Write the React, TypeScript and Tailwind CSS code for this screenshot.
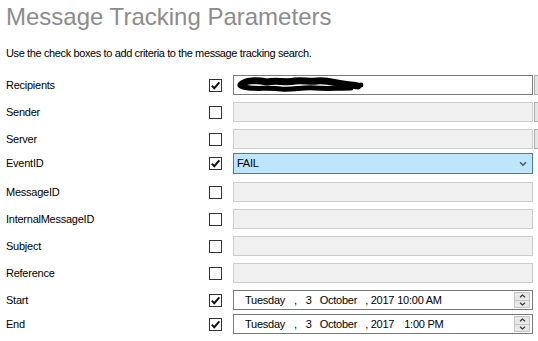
import React from 'react';

type Row = {
  label: string;
  checked: boolean;
  kind: 'text' | 'disabled' | 'combo' | 'date';
  gap: string;
  extra?: boolean;
  value?: string;
  time?: string;
};

const rows: Row[] = [
  { label: 'Recipients', checked: true, kind: 'text', gap: 'mt-0', extra: true },
  { label: 'Sender', checked: false, kind: 'disabled', gap: 'mt-[7px]', extra: true },
  { label: 'Server', checked: false, kind: 'disabled', gap: 'mt-[7px]', extra: true },
  { label: 'EventID', checked: true, kind: 'combo', gap: 'mt-[4px]', value: 'FAIL' },
  { label: 'MessageID', checked: false, kind: 'disabled', gap: 'mt-[8px]' },
  { label: 'InternalMessageID', checked: false, kind: 'disabled', gap: 'mt-[7px]' },
  { label: 'Subject', checked: false, kind: 'disabled', gap: 'mt-[7px]' },
  { label: 'Reference', checked: false, kind: 'disabled', gap: 'mt-[7px]' },
  { label: 'Start', checked: true, kind: 'date', gap: 'mt-[7px]', time: '10:00 AM' },
  { label: 'End', checked: true, kind: 'date', gap: 'mt-[4px]', time: '1:00 PM' },
];

function CheckBox({ checked }: { checked: boolean }) {
  return (
    <div className="w-[13px] h-[13px] border border-[#333333] bg-white flex items-center justify-center shrink-0">
      {checked && (
        <svg width="11" height="11" viewBox="0 0 11 11">
          <path d="M1.8 5.6 L4.3 8.2 L9.3 2.4" fill="none" stroke="#111" strokeWidth="2" />
        </svg>
      )}
    </div>
  );
}

// redacted recipient address
function Scribble() {
  return (
    <svg width="130" height="16" viewBox="0 0 130 16" className="ml-[3px]">
      <path
        d="M4 8 C8 3 20 3 30 5 C40 3 48 6 58 4 C66 3 72 5 80 4 C90 3 98 6 106 7 C112 8 118 8 121 9"
        fill="none"
        stroke="#000"
        strokeWidth="7"
        strokeLinecap="round"
      />
      <path
        d="M6 10 C18 13 30 10 44 12 C56 13 66 10 78 11 C90 12 100 11 114 11"
        fill="none"
        stroke="#000"
        strokeWidth="5"
        strokeLinecap="round"
      />
      <circle cx="124" cy="8" r="2.4" fill="#000" />
      <circle cx="119" cy="10" r="2" fill="#000" />
    </svg>
  );
}

function Field({ row }: { row: Row }) {
  if (row.kind === 'text') {
    return (
      <div className="w-[300px] h-[20px] border border-[#7a7a7a] bg-white flex items-center">
        <Scribble />
      </div>
    );
  }
  if (row.kind === 'disabled') {
    return <div className="w-[300px] h-[20px] border border-[#cccccc] bg-[#f0f0f0]" />;
  }
  if (row.kind === 'combo') {
    return (
      <div className="w-[300px] h-[21px] border border-[#3c7fb1] bg-[#bfe5fb] flex items-center justify-between pl-[3px] pr-[5px]">
        <span>{row.value}</span>
        <svg width="8" height="6" viewBox="0 0 8 6">
          <path d="M1 1.2 L4 4.2 L7 1.2" fill="none" stroke="#4a5a6a" strokeWidth="1.6" />
        </svg>
      </div>
    );
  }
  const short = row.time === '1:00 PM';
  return (
    <div className="w-[300px] h-[20px] border border-[#7a7a7a] bg-white flex items-center pl-[11px] pr-[2px]">
      <span>Tuesday</span>
      <span className="ml-[9px]">,</span>
      <span className="ml-[9px]">3</span>
      <span className="ml-[8px]">October</span>
      <span className="ml-[8px]">, 2017</span>
      <span className={short ? 'ml-[10px]' : 'ml-[3px]'}>{row.time}</span>
      <div className="ml-auto w-[16px] h-[16px] border border-[#c4c4c4] flex flex-col">
        <div className="flex-1 bg-[#e8e8e8] border-b border-[#c4c4c4] flex items-center justify-center">
          <svg width="7" height="4" viewBox="0 0 7 4">
            <path d="M1 3.3 L3.5 1 L6 3.3" fill="none" stroke="#333" strokeWidth="1.2" />
          </svg>
        </div>
        <div className="flex-1 bg-[#e8e8e8] flex items-center justify-center">
          <svg width="7" height="4" viewBox="0 0 7 4">
            <path d="M1 0.8 L3.5 3 L6 0.8" fill="none" stroke="#333" strokeWidth="1.2" />
          </svg>
        </div>
      </div>
    </div>
  );
}

export default function App() {
  return (
    <div
      className="w-[538px] h-[341px] bg-white overflow-hidden text-black text-[11px] tracking-[-0.25px]"
      style={{ fontFamily: '"Liberation Sans", Arial, sans-serif' }}
    >
      {/* Header */}
      <h1 className="pl-[6px] pt-[3px] text-[24px] leading-[28px] text-[#8c8c8c] tracking-normal">
        Message Tracking Parameters
      </h1>
      <p className="pl-[6px] mt-[15px] leading-[14px] tracking-[-0.38px]">
        Use the check boxes to add criteria to the message tracking search.
      </p>

      {/* Criteria rows */}
      <div className="mt-[15px] flex flex-col">
        {rows.map((row) => (
          <div key={row.label} className={`${row.gap} flex items-center`}>
            <div className="w-[209px] pl-[6px] shrink-0">{row.label}</div>
            <CheckBox checked={row.checked} />
            <div className="ml-[11px] shrink-0">
              <Field row={row} />
            </div>
            {row.extra && (
              <div className="ml-[1px] w-[20px] h-[20px] border border-[#adadad] bg-[#e6e6e6] shrink-0" />
            )}
          </div>
        ))}
      </div>
    </div>
  );
}
